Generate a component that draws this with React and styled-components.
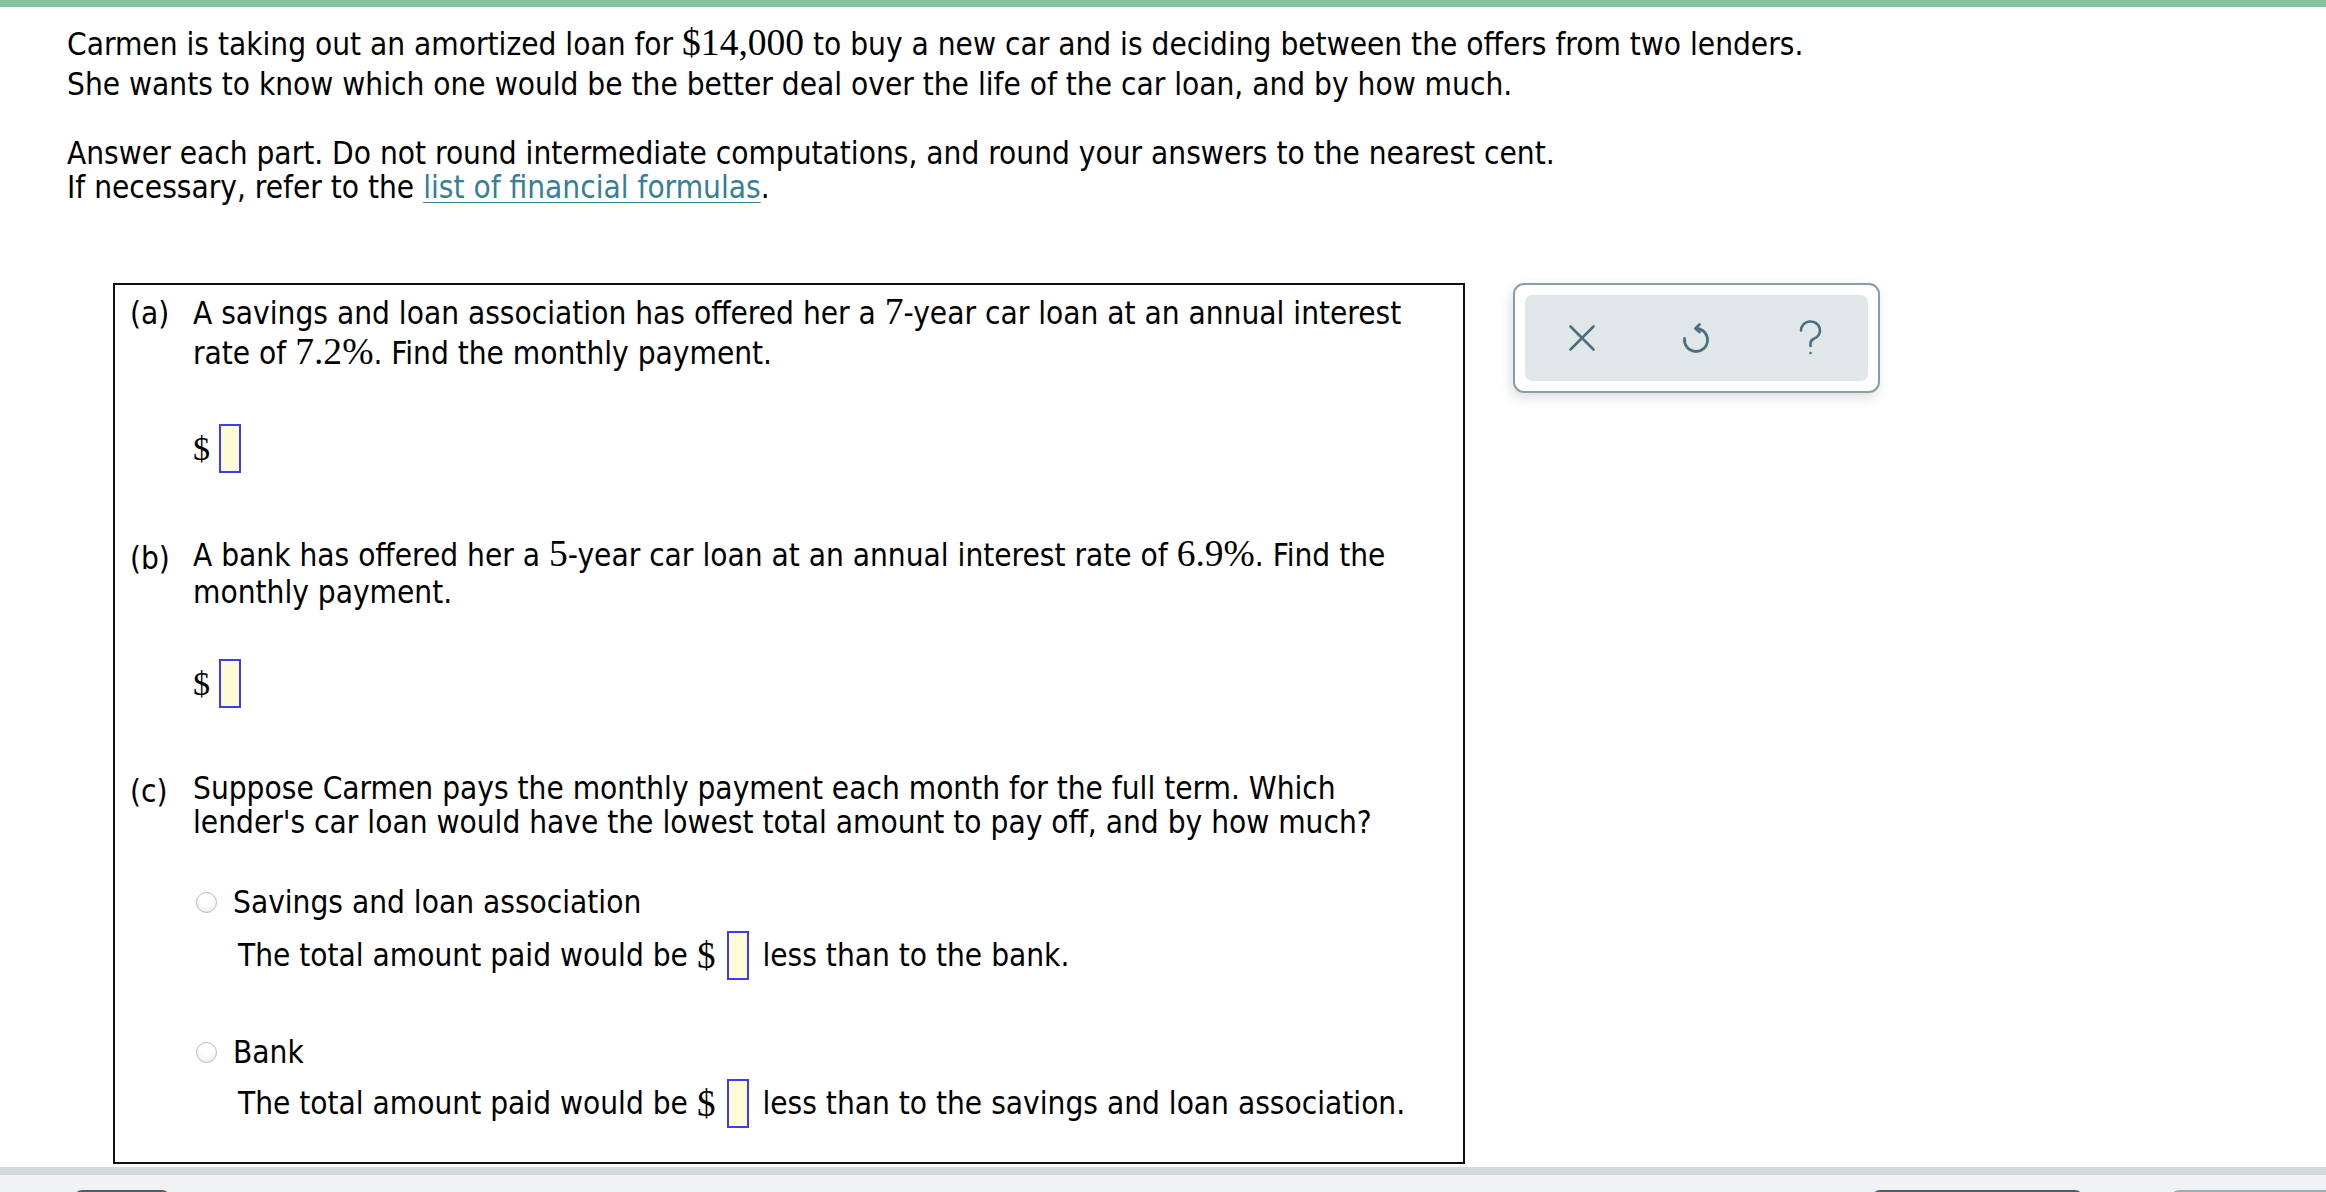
import React from 'react';
import styled, { createGlobalStyle } from 'styled-components';

const GlobalStyle = createGlobalStyle`
  html, body {
    margin: 0;
    padding: 0;
    height: 100%;
    overflow: hidden;
    background: #fff;
  }
  body {
    font-family: "DejaVu Sans Condensed", "DejaVu Sans", sans-serif;
    color: #000;
  }
`;

const Page = styled.div`
  height: 100vh;
  display: flex;
  flex-direction: column;
`;

const TopBar = styled.div`
  height: 7px;
  flex: none;
  background: #85c59b;
`;

const Content = styled.main`
  flex: 1;
  overflow: hidden;
  padding: 17px 0 0 67px;
  font-size: 31.3px;
`;

// one text line; its height sets the spacing to the next line
const Line = styled.div`
  height: ${(p) => p.$h || 34}px;
  line-height: ${(p) => p.$h || 34}px;
  white-space: nowrap;
`;

const Paragraph = styled.div`
  margin-top: ${(p) => p.$top || 0}px;
`;

const Math = styled.span`
  font-family: "Liberation Serif", "Times New Roman", serif;
  font-size: 1.2em;
  line-height: 1;
`;

const Link = styled.a`
  color: #367f95;
  text-decoration: underline;
  text-underline-offset: 4px;
  text-decoration-thickness: 1px;
`;

const Workspace = styled.div`
  display: flex;
  align-items: flex-start;
  gap: 48px;
  margin: 79px 0 0 46px;
`;

const QuestionBox = styled.section`
  width: 1352px;
  box-sizing: border-box;
  border: 2px solid #111;
  padding: 8px 0 33px 15px;
`;

const Part = styled.div`
  display: grid;
  grid-template-columns: 63px 1fr;
  margin-top: ${(p) => p.$top || 0}px;
`;

const PartLabel = styled.div`
  padding-top: ${(p) => p.$shift || 0}px;
`;

const AnswerRow = styled.div`
  display: flex;
  align-items: center;
  gap: 9px;
  height: 49px;
  margin-top: ${(p) => p.$top || 0}px;
`;

const Dollar = styled.span`
  font-family: "Liberation Serif", "Times New Roman", serif;
  font-size: 34px;
`;

const Blank = styled.span`
  display: inline-block;
  flex: none;
  width: 22px;
  height: 49px;
  box-sizing: border-box;
  border: 2px solid #3c3cf2;
  background: #fffbd8;
`;

const Choice = styled.label`
  display: flex;
  align-items: center;
  gap: 16px;
  height: 34px;
  margin: ${(p) => p.$top || 0}px 0 0 66px;
  white-space: nowrap;
`;

const Radio = styled.span`
  flex: none;
  width: 21px;
  height: 21px;
  box-sizing: border-box;
  border-radius: 50%;
  border: 1px solid #b9b9b9;
  background: radial-gradient(circle at 50% 35%, #ffffff 40%, #e4e4e4 100%);
`;

const Sentence = styled.div`
  display: flex;
  align-items: center;
  height: 52px;
  margin: ${(p) => p.$top || 0}px 0 0 108px;
  white-space: nowrap;
`;

const SentenceDollar = styled.span`
  font-family: "Liberation Serif", "Times New Roman", serif;
  font-size: 37px;
  margin: 0 12px 0 9px;
`;

const SentenceTail = styled.span`
  margin-left: 13px;
`;

const Toolbar = styled.div`
  flex: none;
  width: 367px;
  height: 110px;
  box-sizing: border-box;
  border: 2px solid #8a9ea8;
  border-radius: 11px;
  background: #fff;
  padding: 10px;
  box-shadow: -2px 5px 12px rgba(60, 80, 90, 0.18);
`;

const ToolGroup = styled.div`
  height: 100%;
  display: grid;
  grid-template-columns: repeat(3, 1fr);
  align-items: center;
  justify-items: center;
  background: #e1e6e9;
  border-radius: 7px;
`;

const ToolButton = styled.button`
  border: 0;
  background: transparent;
  padding: 0;
  width: 44px;
  height: 44px;
  display: flex;
  align-items: center;
  justify-content: center;
  color: #4b6f7e;
  cursor: pointer;
`;

const Footer = styled.footer`
  flex: none;
  height: 25px;
  overflow: hidden;
  border-top: 8px solid #d3dadd;
  box-sizing: border-box;
  background: #f1f2f4;
  display: flex;
  padding: 15px 0 0 74px;
`;

const FooterButton = styled.div`
  flex: none;
  width: ${(p) => p.$w}px;
  height: 40px;
  margin-left: ${(p) => p.$left || 0}px;
  border-radius: 8px;
  background: ${(p) => (p.$light ? '#a3adb3' : '#4e5d67')};
`;

const IconX = () => (
  <svg width="40" height="40" viewBox="0 0 40 40" fill="none" stroke="currentColor" strokeWidth="2.6" strokeLinecap="round">
    <path d="M8.5 8.5 L31.5 31.5 M31.5 8.5 L8.5 31.5" />
  </svg>
);

const IconUndo = () => (
  <svg width="40" height="40" viewBox="0 0 40 40" fill="none" stroke="currentColor" strokeWidth="2.8" strokeLinecap="round" strokeLinejoin="round">
    <path d="M20 10.5 A11.5 11.5 0 1 1 8.6 20.5" />
    <path d="M23.5 6.5 L19.5 10.5 L23.5 14" />
  </svg>
);

const IconHelp = () => (
  <svg width="40" height="40" viewBox="0 0 40 40" fill="none" stroke="currentColor" strokeWidth="2.6" strokeLinecap="round">
    <path d="M10 12.5 A9.5 9 0 1 1 22.5 21 C20.5 22 19.5 23.5 19.5 25.5 V28" />
    <circle cx="19.5" cy="35" r="1.3" fill="currentColor" stroke="none" />
  </svg>
);

export default function App() {
  return (
    <>
      <GlobalStyle />
      <Page>
        <TopBar />
        <Content>
          <Paragraph>
            <Line $h={40}>
              Carmen is taking out an amortized loan for <Math>$14,000</Math> to buy a new car and is deciding between the offers from two lenders.
            </Line>
            <Line $h={40}>
              She wants to know which one would be the better deal over the life of the car loan, and by how much.
            </Line>
          </Paragraph>
          <Paragraph $top={32}>
            <Line>Answer each part. Do not round intermediate computations, and round your answers to the nearest cent.</Line>
            <Line>
              If necessary, refer to the <Link href="#formulas">list of financial formulas</Link>.
            </Line>
          </Paragraph>

          <Workspace>
            <QuestionBox>
              <Part>
                <PartLabel $shift={2}>(a)</PartLabel>
                <div>
                  <Line $h={40}>
                    A savings and loan association has offered her a <Math>7</Math>-year car loan at an annual interest
                  </Line>
                  <Line $h={40}>
                    rate of <Math>7.2%</Math>. Find the monthly payment.
                  </Line>
                  <AnswerRow $top={51}>
                    <Dollar>$</Dollar>
                    <Blank />
                  </AnswerRow>
                </div>
              </Part>

              <Part $top={62}>
                <PartLabel $shift={5}>(b)</PartLabel>
                <div>
                  <Line $h={40}>
                    A bank has offered her a <Math>5</Math>-year car loan at an annual interest rate of <Math>6.9%</Math>. Find the
                  </Line>
                  <Line>monthly payment.</Line>
                  <AnswerRow $top={50}>
                    <Dollar>$</Dollar>
                    <Blank />
                  </AnswerRow>
                </div>
              </Part>

              <Part $top={63}>
                <PartLabel $shift={2}>(c)</PartLabel>
                <div>
                  <Line>Suppose Carmen pays the monthly payment each month for the full term. Which</Line>
                  <Line>lender's car loan would have the lowest total amount to pay off, and by how much?</Line>
                </div>
              </Part>

              <Choice $top={46}>
                <Radio />
                Savings and loan association
              </Choice>
              <Sentence $top={10}>
                The total amount paid would be
                <SentenceDollar>$</SentenceDollar>
                <Blank />
                <SentenceTail>less than to the bank.</SentenceTail>
              </Sentence>

              <Choice $top={54}>
                <Radio />
                Bank
              </Choice>
              <Sentence $top={8}>
                The total amount paid would be
                <SentenceDollar>$</SentenceDollar>
                <Blank />
                <SentenceTail>less than to the savings and loan association.</SentenceTail>
              </Sentence>
            </QuestionBox>

            <Toolbar>
              <ToolGroup>
                <ToolButton aria-label="Clear">
                  <IconX />
                </ToolButton>
                <ToolButton aria-label="Undo">
                  <IconUndo />
                </ToolButton>
                <ToolButton aria-label="Help">
                  <IconHelp />
                </ToolButton>
              </ToolGroup>
            </Toolbar>
          </Workspace>
        </Content>
        <Footer>
          <FooterButton $w={96} />
          <FooterButton $w={211} $left={1702} />
          <FooterButton $w={200} $left={88} $light />
        </Footer>
      </Page>
    </>
  );
}
